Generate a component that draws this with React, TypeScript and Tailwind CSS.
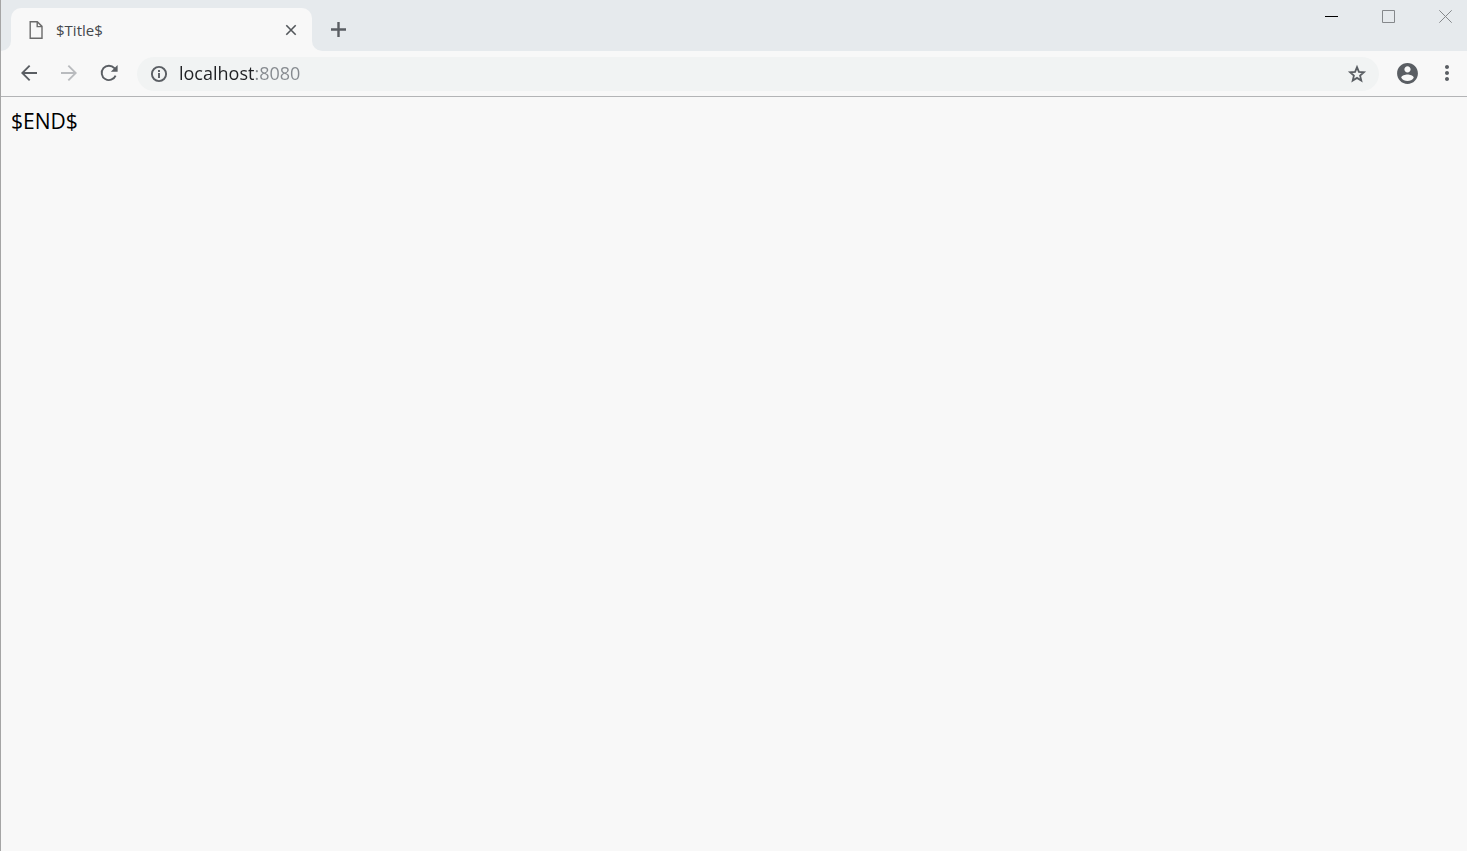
import type { ReactNode } from "react";

function MaterialIcon({ path, className }: { path: string; className: string }) {
  return (
    <svg viewBox="0 0 24 24" className={className} fill="currentColor" aria-hidden="true">
      <path d={path} />
    </svg>
  );
}

function ToolButton({ label, disabled, children }: { label: string; disabled?: boolean; children: ReactNode }) {
  return (
    <button
      type="button"
      aria-label={label}
      disabled={disabled}
      className="flex h-[34px] w-10 shrink-0 items-center justify-center pb-0.5 text-[#5a5e63] disabled:text-[#b9bbbe]"
    >
      {children}
    </button>
  );
}

function WindowButton({ label, className, path }: { label: string; className: string; path: string }) {
  return (
    <button type="button" aria-label={label} className="flex h-[33px] w-[43px] items-center justify-center">
      <svg viewBox="0 0 13 13" className={`size-[13px] ${className}`} fill="none" stroke="currentColor" aria-hidden="true">
        <path d={path} />
      </svg>
    </button>
  );
}

function TabStrip() {
  return (
    <header className="flex h-[51px] items-end bg-[#e6eaed]">
      <div className="bg-[#f8f8f8]">
        <div className="size-2.5 rounded-br-[10px] bg-[#e6eaed]" />
      </div>
      <div className="flex h-[43px] w-[301px] items-center rounded-t-[10px] bg-[#f8f8f8] pr-3 pl-[17px]">
        <svg viewBox="0 0 16 20" className="h-5 w-4 shrink-0" fill="none" stroke="#6b6b6b" strokeWidth="1.4" aria-hidden="true">
          <path d="M2.2 1.7H9.3L14 6.4V18.3H2.2ZM9.2 1.8V6.6H13.9" />
        </svg>
        <span className="ml-3 flex-1 truncate text-[15px] leading-5 text-[#45494d]">$Title$</span>
        <button type="button" aria-label="Close tab" className="flex size-[18px] items-center justify-center text-[#53575b]">
          <svg viewBox="0 0 12 12" className="size-3" fill="none" stroke="currentColor" strokeWidth="1.6" aria-hidden="true">
            <path d="M1.3 1.3L10.7 10.7M10.7 1.3L1.3 10.7" />
          </svg>
        </button>
      </div>
      <div className="bg-[#f8f8f8]">
        <div className="size-2.5 rounded-bl-[10px] bg-[#e6eaed]" />
      </div>
      <button type="button" aria-label="New tab" className="flex h-[43px] w-[33px] items-center justify-center text-[#5a5e63]">
        <svg viewBox="0 0 15 15" className="size-[15px]" fill="none" stroke="currentColor" strokeWidth="2.4" aria-hidden="true">
          <path d="M7.5 0V15M0 7.5H15" />
        </svg>
      </button>
      <div className="ml-auto flex gap-3.5 self-start">
        <WindowButton label="Minimize" className="text-black" path="M0 6.5H13" />
        <WindowButton label="Maximize" className="text-[#85888b]" path="M0.5 0.5H12.5V12.5H0.5Z" />
        <WindowButton label="Close" className="text-[#85888b]" path="M0.3 0.3L12.7 12.7M12.7 0.3L0.3 12.7" />
      </div>
    </header>
  );
}

function Toolbar() {
  return (
    <nav className="flex border-b border-[#b3b4b6] pt-1.5 pb-[5px] pl-2">
      <ToolButton label="Back">
        <MaterialIcon className="size-6" path="M20 11.1H7.63l5.69-5.79L12 4l-8 8 8 8 1.32-1.31L7.63 12.9H20v-1.8z" />
      </ToolButton>
      <ToolButton label="Forward" disabled>
        <MaterialIcon className="size-6" path="M12 4l-1.32 1.31L16.37 11.1H4v1.8h12.37l-5.69 5.79L12 20l8-8z" />
      </ToolButton>
      <ToolButton label="Reload">
        <svg viewBox="0 0 24 24" className="size-6" fill="none" stroke="currentColor" strokeWidth="1.9" aria-hidden="true">
          <path d="M18.6 14.6A7.2 7.2 0 1 1 17.4 7.2L18.8 8.8" />
          <path d="M20.6 4V10.8H13.8Z" fill="currentColor" stroke="none" />
        </svg>
      </ToolButton>
      <form className="ml-2 flex h-[34px] flex-1 items-center rounded-full bg-[#f1f3f3] px-3 text-[#5a5e63]">
        <button type="button" aria-label="View site information">
          <svg viewBox="0 0 20 20" className="size-5" fill="none" stroke="currentColor" strokeWidth="1.9" aria-hidden="true">
            <circle cx="10" cy="10" r="7.1" />
            <path d="M10 9V14M10 6V8" />
          </svg>
        </button>
        <input
          type="text"
          aria-label="Address"
          defaultValue="localhost:8080"
          className="ml-2.5 min-w-0 flex-1 bg-[linear-gradient(to_right,#202124_75px,#85898e_75px)] bg-clip-text pb-0.5 text-lg leading-6 text-transparent caret-black outline-none"
        />
        <button type="button" aria-label="Bookmark this page">
          <svg viewBox="0 0 20 20" className="size-5" fill="none" stroke="currentColor" strokeWidth="1.8" aria-hidden="true">
            <path d="M10 3.2L11.9 7.9L16.9 8.3L13.1 11.6L14.3 16.5L10 13.9L5.7 16.5L6.9 11.6L3.1 8.3L8.1 7.9Z" />
          </svg>
        </button>
      </form>
      <div className="ml-2 flex">
        <ToolButton label="Profile">
          <MaterialIcon
            className="size-[25px]"
            path="M12 2C6.48 2 2 6.48 2 12s4.48 10 10 10 10-4.48 10-10S17.52 2 12 2zm0 3c1.66 0 3 1.34 3 3s-1.34 3-3 3-3-1.34-3-3 1.34-3 3-3zm0 14.2c-2.5 0-4.71-1.28-6-3.22.03-1.99 4-3.08 6-3.08 1.99 0 5.97 1.09 6 3.08-1.29 1.94-3.5 3.22-6 3.22z"
          />
        </ToolButton>
        <ToolButton label="Menu">
          <MaterialIcon
            className="size-6"
            path="M12 8c1.1 0 2-.9 2-2s-.9-2-2-2-2 .9-2 2 .9 2 2 2zm0 2c-1.1 0-2 .9-2 2s.9 2 2 2 2-.9 2-2-.9-2-2-2zm0 6c-1.1 0-2 .9-2 2s.9 2 2 2 2-.9 2-2-.9-2-2-2z"
          />
        </ToolButton>
      </div>
    </nav>
  );
}

export default function App() {
  return (
    <div className="min-h-screen border-l border-[#a5a5a5] bg-[#f8f8f8] font-['Open_Sans',sans-serif]">
      <TabStrip />
      <Toolbar />
      <main className="p-2.5 text-[21px] leading-7 text-black">$END$</main>
    </div>
  );
}
